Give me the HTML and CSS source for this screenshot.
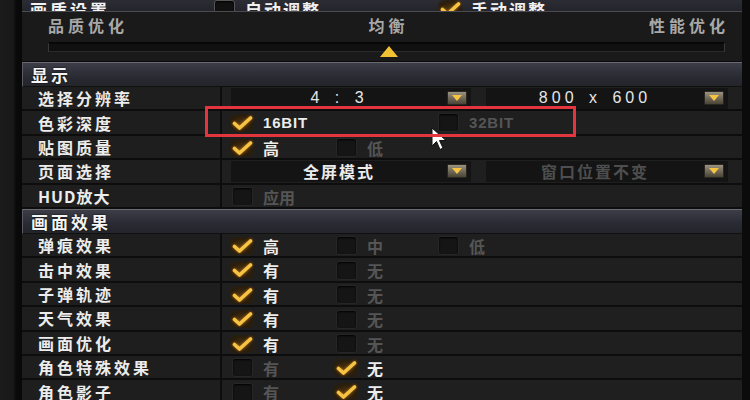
FILE: index.html
```html
<!DOCTYPE html>
<html lang="zh">
<head>
<meta charset="utf-8">
<title>画质设置</title>
<link rel="stylesheet" href="styles.css">
</head>
<body>
<div class="screen">
  <div class="gutter-left"></div>
  <div class="panel">
    <div class="top-row">
      <div class="top-title">画质设置</div>
      <div class="opt"><span class="box"></span><span class="opt-text">自动调整</span></div>
      <div class="opt"><span class="box on"><svg viewBox="0 0 24 18"><path d="M4.5 9.5 L9.5 14 L20.5 4"/></svg></span><span class="opt-text">手动调整</span></div>
    </div>

    <div class="slider">
      <div class="slider-labels"><span>品质优化</span><span>均衡</span><span>性能优化</span></div>
      <div class="track"><span class="thumb"></span></div>
    </div>

    <div class="section-head">显示</div>

    <div class="row">
      <div class="label">选择分辨率</div>
      <div class="value drops">
        <div class="drop"><span class="drop-text mono">4 : 3</span><span class="drop-btn"></span></div>
        <div class="drop"><span class="drop-text mono">800 x 600</span><span class="drop-btn"></span></div>
      </div>
    </div>
    <div class="row">
      <div class="label">色彩深度</div>
      <div class="value opts">
        <div class="opt span2"><span class="box on"><svg viewBox="0 0 24 18"><path d="M4.5 9.5 L9.5 14 L20.5 4"/></svg></span><span class="opt-text latin">16BIT</span></div>
        <div class="opt off"><span class="box"></span><span class="opt-text latin">32BIT</span></div>
      </div>
    </div>
    <div class="row">
      <div class="label">贴图质量</div>
      <div class="value opts">
        <div class="opt"><span class="box on"><svg viewBox="0 0 24 18"><path d="M4.5 9.5 L9.5 14 L20.5 4"/></svg></span><span class="opt-text">高</span></div>
        <div class="opt off"><span class="box"></span><span class="opt-text">低</span></div>
      </div>
    </div>
    <div class="row">
      <div class="label">页面选择</div>
      <div class="value drops">
        <div class="drop"><span class="drop-text">全屏模式</span><span class="drop-btn"></span></div>
        <div class="drop dim"><span class="drop-text">窗口位置不变</span><span class="drop-btn"></span></div>
      </div>
    </div>
    <div class="row">
      <div class="label latin-label">HUD放大</div>
      <div class="value opts">
        <div class="opt off"><span class="box"></span><span class="opt-text">应用</span></div>
      </div>
    </div>

    <div class="section-head">画面效果</div>

    <div class="row">
      <div class="label">弹痕效果</div>
      <div class="value opts">
        <div class="opt"><span class="box on"><svg viewBox="0 0 24 18"><path d="M4.5 9.5 L9.5 14 L20.5 4"/></svg></span><span class="opt-text">高</span></div>
        <div class="opt off"><span class="box"></span><span class="opt-text">中</span></div>
        <div class="opt off"><span class="box"></span><span class="opt-text">低</span></div>
      </div>
    </div>
    <div class="row">
      <div class="label">击中效果</div>
      <div class="value opts">
        <div class="opt"><span class="box on"><svg viewBox="0 0 24 18"><path d="M4.5 9.5 L9.5 14 L20.5 4"/></svg></span><span class="opt-text">有</span></div>
        <div class="opt off"><span class="box"></span><span class="opt-text">无</span></div>
      </div>
    </div>
    <div class="row">
      <div class="label">子弹轨迹</div>
      <div class="value opts">
        <div class="opt"><span class="box on"><svg viewBox="0 0 24 18"><path d="M4.5 9.5 L9.5 14 L20.5 4"/></svg></span><span class="opt-text">有</span></div>
        <div class="opt off"><span class="box"></span><span class="opt-text">无</span></div>
      </div>
    </div>
    <div class="row">
      <div class="label">天气效果</div>
      <div class="value opts">
        <div class="opt"><span class="box on"><svg viewBox="0 0 24 18"><path d="M4.5 9.5 L9.5 14 L20.5 4"/></svg></span><span class="opt-text">有</span></div>
        <div class="opt off"><span class="box"></span><span class="opt-text">无</span></div>
      </div>
    </div>
    <div class="row">
      <div class="label">画面优化</div>
      <div class="value opts">
        <div class="opt"><span class="box on"><svg viewBox="0 0 24 18"><path d="M4.5 9.5 L9.5 14 L20.5 4"/></svg></span><span class="opt-text">有</span></div>
        <div class="opt off"><span class="box"></span><span class="opt-text">无</span></div>
      </div>
    </div>
    <div class="row">
      <div class="label">角色特殊效果</div>
      <div class="value opts">
        <div class="opt off"><span class="box"></span><span class="opt-text">有</span></div>
        <div class="opt"><span class="box on"><svg viewBox="0 0 24 18"><path d="M4.5 9.5 L9.5 14 L20.5 4"/></svg></span><span class="opt-text">无</span></div>
      </div>
    </div>
    <div class="row">
      <div class="label">角色影子</div>
      <div class="value opts">
        <div class="opt off"><span class="box"></span><span class="opt-text">有</span></div>
        <div class="opt"><span class="box on"><svg viewBox="0 0 24 18"><path d="M4.5 9.5 L9.5 14 L20.5 4"/></svg></span><span class="opt-text">无</span></div>
      </div>
    </div>
  </div>
  <div class="gutter-right"></div>

  <svg class="cursor" viewBox="0 0 17 24"><path d="M1 1 L1 19 L5.5 14.5 L9 22.5 L12 21 L8.5 13.5 L15 13.5 Z"/></svg>
  <div class="highlight"></div>
</div>
</body>
</html>
```

FILE: styles.css
```css
* { box-sizing: border-box; }

html, body {
  margin: 0;
  padding: 0;
  background: #0c0c0c;
}

body {
  font-family: "Noto Sans CJK SC", "Liberation Sans", sans-serif;
  color: #e8e8e8;
}

.screen {
  position: relative;
  width: 750px;
  height: 400px;
  overflow: hidden;
  display: flex;
  background: #0c0c0c;
}

.gutter-left {
  width: 22px;
  flex: none;
  background: linear-gradient(to right, #1b1b1b 0, #191919 13px, #0a0a0a 16px, #080808 22px);
}

.gutter-right {
  width: 8px;
  flex: none;
  background: #0b0b0b;
}

.panel {
  width: 720px;
  flex: none;
  display: flex;
  flex-direction: column;
  background: #1c1c1c;
}

/* top cut-off row */
.top-row {
  height: 12px;
  flex: none;
  overflow: hidden;
  display: grid;
  grid-template-columns: 182px 226px 1fr;
  align-items: end;
  padding-left: 8px;
  background: linear-gradient(#2c2c34, #24242b);
  border-bottom: 1px solid #4a4a50;
}

.top-row > * {
  height: 18px;
  display: flex;
  align-items: center;
}

.top-title {
  font-size: 17px;
  font-weight: 700;
  letter-spacing: 3px;
  color: #f2f2f2;
}

/* slider */
.slider {
  height: 50px;
  flex: none;
  padding: 2px 17px 0 26px;
  background: #1a1a1a;
  border-bottom: 1px solid #0c0c0c;
}

.slider-labels {
  display: flex;
  justify-content: space-between;
  font-size: 16px;
  font-weight: 700;
  letter-spacing: 4px;
  color: #a8a8a8;
  line-height: 22px;
}

.slider-labels span:last-child { margin-right: -4px; }

.track {
  position: relative;
  margin-top: 6px;
  height: 10px;
  background: #101010;
  border-top: 2px solid #070707;
  border-left: 1px solid #3a3a3a;
  border-right: 1px solid #3a3a3a;
  border-bottom: 1px solid #2a2a2a;
}

.thumb {
  position: absolute;
  left: 331px;
  top: 2px;
  width: 0;
  height: 0;
  border-left: 9px solid transparent;
  border-right: 9px solid transparent;
  border-bottom: 11px solid #f2c232;
}

/* section header */
.section-head {
  height: 25px;
  flex: none;
  display: flex;
  align-items: center;
  padding-left: 8px;
  font-size: 17px;
  font-weight: 700;
  letter-spacing: 3px;
  color: #f4f4f4;
  text-shadow: 0 0 2px #000;
  background: linear-gradient(#3d3d48, #2a2a33 60%, #24242b);
  border-top: 1px solid #6a6a72;
  border-left: 1px solid #5a5a62;
  border-bottom: 1px solid #101010;
}

/* rows */
.row {
  height: 24.4px;
  flex: none;
  display: flex;
  border-bottom: 2px solid #0d0d0d;
  background: #1e1e1e;
}

.label {
  width: 200px;
  flex: none;
  padding-left: 16px;
  display: flex;
  align-items: center;
  font-size: 16px;
  font-weight: 700;
  letter-spacing: 3px;
  color: #ececec;
  border-right: 2px solid #0d0d0d;
  white-space: nowrap;
}

.latin-label { letter-spacing: 1px; }

.value {
  flex: 1;
  display: flex;
  align-items: center;
  background: #1f1f1f;
}

/* option groups */
.opts {
  display: grid;
  grid-template-columns: 104px 102px 1fr;
  padding-left: 8px;
}

.opt {
  display: flex;
  align-items: center;
  gap: 9px;
}

.span2 { grid-column: span 2; }

.opt-text {
  font-size: 16px;
  font-weight: 700;
  color: #ececec;
}

.top-row .opt-text { letter-spacing: 2px; font-size: 17px; color: #f0f0f0; }

.opt.off .opt-text { color: #555555; }

.latin {
  font-family: "Liberation Sans", "Noto Sans CJK SC", sans-serif;
  font-size: 15px;
  letter-spacing: 0.8px;
}

.box {
  width: 24px;
  height: 18px;
  flex: none;
  display: flex;
  align-items: center;
  justify-content: center;
}

.box:not(.on)::before {
  content: "";
  width: 19px;
  height: 17px;
  border-radius: 3px;
  background: #151515;
  border: 1px solid #262626;
  box-shadow: inset 0 1px 2px #000;
}

.top-row .box:not(.on)::before { border-color: #555; background: #111; }

.box.on {
  border-radius: 4px;
  background: radial-gradient(ellipse at center, #4a3412 0%, #2a1d0b 60%, rgba(30, 20, 8, 0) 100%);
}

.box.on svg {
  width: 24px;
  height: 18px;
  overflow: visible;
}

.box.on path {
  fill: none;
  stroke: #f6c444;
  stroke-width: 3.6;
  stroke-linecap: round;
  stroke-linejoin: round;
  filter: drop-shadow(0 0 1.5px #c07010);
}

/* dropdowns */
.drops {
  display: grid;
  grid-template-columns: 240px 1fr;
  column-gap: 15px;
  padding: 0 14px 0 9px;
}

.drop {
  height: 21px;
  display: flex;
  align-items: center;
  background: #141414;
  padding-right: 4px;
}

.drop-text {
  flex: 1;
  text-align: center;
  font-size: 16px;
  font-weight: 700;
  letter-spacing: 2px;
  color: #ececec;
  white-space: pre;
}

.drop.dim .drop-text { color: #4e4e4e; }

.mono {
  font-family: "Liberation Sans", sans-serif;
  font-weight: 400;
  font-size: 16px;
  letter-spacing: 4px;
  word-spacing: 3px;
  color: #e6e6e6;
}

.drop-btn {
  width: 20px;
  height: 14px;
  flex: none;
  display: flex;
  align-items: center;
  justify-content: center;
  border-radius: 1px;
  background: linear-gradient(#9a9382, #6e6756 55%, #4a4436);
  border: 1px solid #2a2620;
}

.drop-btn::before {
  content: "";
  width: 0;
  height: 0;
  border-left: 5px solid transparent;
  border-right: 5px solid transparent;
  border-top: 6px solid #f6c440;
}

/* overlays */
.cursor {
  position: absolute;
  left: 431px;
  top: 127px;
  width: 17px;
  height: 24px;
}

.cursor path {
  fill: #ffffff;
  stroke: #111;
  stroke-width: 1;
  stroke-linejoin: round;
}

.highlight {
  position: absolute;
  left: 205px;
  top: 106px;
  width: 371px;
  height: 31px;
  border: 3px solid #e2353d;
}
```
